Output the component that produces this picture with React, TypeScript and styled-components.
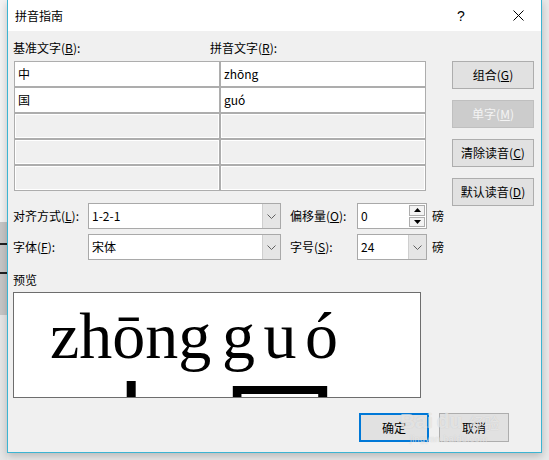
import React from 'react';
import styled, { createGlobalStyle } from 'styled-components';

const GlobalStyle = createGlobalStyle`
  html, body {
    margin: 0;
    padding: 0;
  }
  body {
    background: #ebebeb;
    font-family: "Noto Sans CJK SC", "Noto Sans", sans-serif;
    font-size: 12px;
    color: #000;
  }
`;

const Page = styled.div`
  display: flex;
  width: 549px;
  height: 460px;
  overflow: hidden;
  background: #e9e9e9;
`;

const LeftStrip = styled.div`
  width: 7px;
  flex-shrink: 0;
  display: flex;
  flex-direction: column;
`;

const StripPart = styled.div<{ $h: number; $bg: string }>`
  height: ${(p) => p.$h}px;
  background: ${(p) => p.$bg};
`;

const Window = styled.div`
  position: relative;
  width: 535px;
  height: 453px;
  flex-shrink: 0;
  box-sizing: border-box;
  border: 1px solid #3cb4d2;
  border-top: none;
  background: #f0f0f0;
  display: flex;
  flex-direction: column;
  box-shadow: 0 3px 8px rgba(0, 0, 0, 0.22);
`;

const TitleBar = styled.div`
  height: 31px;
  background: #fff;
  display: flex;
  align-items: center;
  padding-left: 7px;
  font-size: 12px;
`;

const Title = styled.div`
  flex: 1;
  line-height: 16px;
`;

const TitleButton = styled.div<{ $w: number }>`
  width: ${(p) => p.$w}px;
  height: 31px;
  display: flex;
  align-items: center;
  justify-content: center;
  font-family: "Liberation Sans", sans-serif;
  font-size: 14px;
`;

const Body = styled.div`
  display: flex;
  flex-direction: column;
  padding: 9px 0 0 5px;
`;

const TopRow = styled.div`
  display: flex;
`;

const MainCol = styled.div`
  width: 432px;
  display: flex;
  flex-direction: column;
`;

const LabelsRow = styled.div`
  display: flex;
  height: 16px;
  line-height: 16px;
`;

const Label = styled.div<{ $w?: number; $ml?: number }>`
  width: ${(p) => (p.$w ? `${p.$w}px` : 'auto')};
  margin-left: ${(p) => p.$ml ?? 0}px;
  line-height: 16px;
  white-space: nowrap;
  flex-shrink: 0;
`;

const Grid = styled.div`
  margin: 5px 0 0 1px;
  display: grid;
  grid-template-columns: 206px 206px;
  grid-auto-rows: 26px;
`;

const Cell = styled.div<{ $filled: boolean }>`
  box-sizing: border-box;
  border: 1px solid #adadad;
  background: ${(p) => (p.$filled ? '#fff' : '#f0f0f0')};
  box-shadow: ${(p) => (p.$filled ? 'none' : 'inset 0 0 0 1px #fff')};
  padding-left: 3px;
  line-height: 24px;
  font-size: 12px;
`;

const OptionRow = styled.div<{ $mt: number }>`
  display: flex;
  align-items: center;
  height: 26px;
  margin-top: ${(p) => p.$mt}px;
`;

const Combo = styled.div<{ $w: number }>`
  width: ${(p) => p.$w}px;
  height: 26px;
  box-sizing: border-box;
  border: 1px solid #a9a9a9;
  background: #fff;
  display: flex;
  align-items: stretch;
  flex-shrink: 0;
`;

const ComboText = styled.div`
  flex: 1;
  padding-left: 3px;
  line-height: 24px;
  font-size: 12px;
`;

const DropButton = styled.div`
  width: 17px;
  background: #e5e5e5;
  border-left: 1px solid #cfcfcf;
  display: flex;
  align-items: center;
  justify-content: center;
`;

const SpinButtons = styled.div`
  width: 16px;
  display: flex;
  flex-direction: column;
  padding: 1px 1px 1px 0;
  gap: 1px;
`;

const SpinHalf = styled.div`
  flex: 1;
  border: 1px solid #adadad;
  background: #f3f3f3;
  display: flex;
  align-items: center;
  justify-content: center;
`;

const Unit = styled.div`
  margin-left: 5px;
  line-height: 16px;
`;

const PreviewLabel = styled.div`
  margin-top: 12px;
  line-height: 16px;
`;

const Preview = styled.div`
  margin-top: 4px;
  width: 408px;
  height: 106px;
  box-sizing: border-box;
  border: 1px solid #6d6d6d;
  background: #fff;
  overflow: hidden;
  display: flex;
  gap: 9px;
  padding: 10px 0 0 36px;
`;

const RubyCol = styled.div`
  display: flex;
  flex-direction: column;
  align-items: center;
`;

const Pinyin = styled.div<{ $w: number; $spread?: boolean }>`
  width: ${(p) => p.$w}px;
  display: flex;
  justify-content: ${(p) => (p.$spread ? 'space-between' : 'flex-start')};
  font-family: "Liberation Serif", "Times New Roman", serif;
  font-size: 66px;
  line-height: 66px;
`;

const Hanzi = styled.div`
  margin-top: 3px;
  font-family: "Noto Sans CJK SC", sans-serif;
  font-size: 114px;
  line-height: 112px;
`;

const ButtonCol = styled.div`
  margin: 21px 0 0 7px;
  display: flex;
  flex-direction: column;
  gap: 11px;
`;

const Button = styled.div<{ $w: number; $h: number; $disabled?: boolean; $default?: boolean }>`
  width: ${(p) => p.$w}px;
  height: ${(p) => p.$h}px;
  box-sizing: border-box;
  border: ${(p) =>
    p.$default ? '2px solid #0078d7' : p.$disabled ? '1px solid #bfbfbf' : '1px solid #adadad'};
  background: ${(p) => (p.$disabled ? '#cccccc' : '#e1e1e1')};
  color: ${(p) => (p.$disabled ? '#f4f4f4' : '#000')};
  display: flex;
  align-items: center;
  justify-content: center;
  font-size: 12px;
  line-height: 16px;
`;

const Footer = styled.div`
  margin-top: 15px;
  display: flex;
  justify-content: flex-end;
  gap: 10px;
  padding-right: 32px;
`;

const Watermark = styled.div`
  position: absolute;
  left: 392px;
  top: 410px;
  color: rgba(255, 255, 255, 0.55);
  text-shadow: 0 0 1px rgba(150, 150, 150, 0.45);
  font-family: "Liberation Sans", sans-serif;
  pointer-events: none;
`;

const WmLogo = styled.div`
  display: flex;
  align-items: flex-end;
  gap: 4px;
  font-size: 21px;
  font-weight: bold;
  line-height: 22px;
`;

const WmCn = styled.span`
  font-family: "Noto Sans CJK SC", sans-serif;
  font-size: 15px;
  font-weight: normal;
  line-height: 18px;
  margin-left: 3px;
`;

const WmUrl = styled.div`
  font-size: 9px;
  line-height: 10px;
  margin: 2px 0 0 10px;
  letter-spacing: 0.3px;
`;

const Chevron = () => (
  <svg width="9" height="5" viewBox="0 0 9 5">
    <polyline points="0.5,0.5 4.5,4.5 8.5,0.5" fill="none" stroke="#606060" strokeWidth="1" />
  </svg>
);

const Tri = ({ up }: { up: boolean }) => (
  <svg width="7" height="4" viewBox="0 0 7 4">
    <polygon points={up ? '3.5,0 7,4 0,4' : '0,0 7,0 3.5,4'} fill="#000" />
  </svg>
);

const CloseGlyph = () => (
  <svg width="11" height="11" viewBox="0 0 11 11">
    <path d="M0.5 0.5 L10.5 10.5 M10.5 0.5 L0.5 10.5" stroke="#000" strokeWidth="1" />
  </svg>
);

const rows: [string, string][] = [
  ['中', 'zhōng'],
  ['国', 'guó'],
  ['', ''],
  ['', ''],
  ['', ''],
];

export default function App() {
  return (
    <>
      <GlobalStyle />
      <Page>
        <LeftStrip>
          <StripPart $h={222} $bg="#f3f3f3" />
          <StripPart $h={21} $bg="#c6c6c6" />
          <StripPart $h={2} $bg="#202020" />
          <StripPart $h={27} $bg="#c6c6c6" />
          <StripPart $h={2} $bg="#202020" />
          <StripPart $h={41} $bg="#c6c6c6" />
          <StripPart $h={145} $bg="#e6e6e6" />
        </LeftStrip>
        <Window>
          <TitleBar>
            <Title>拼音指南</Title>
            <TitleButton $w={30}>?</TitleButton>
            <TitleButton $w={19} />
            <TitleButton $w={46}>
              <CloseGlyph />
            </TitleButton>
          </TitleBar>
          <Body>
            <TopRow>
              <MainCol>
                <LabelsRow>
                  <Label $w={197}>
                    基准文字(<u>B</u>):
                  </Label>
                  <Label>
                    拼音文字(<u>R</u>):
                  </Label>
                </LabelsRow>
                <Grid>
                  {rows.map(([a, b], i) => (
                    <React.Fragment key={i}>
                      <Cell $filled={i < 2}>{a}</Cell>
                      <Cell $filled={i < 2}>{b}</Cell>
                    </React.Fragment>
                  ))}
                </Grid>
                <OptionRow $mt={12}>
                  <Label $w={75}>
                    对齐方式(<u>L</u>):
                  </Label>
                  <Combo $w={193}>
                    <ComboText>1-2-1</ComboText>
                    <DropButton>
                      <Chevron />
                    </DropButton>
                  </Combo>
                  <Label $w={67} $ml={9}>
                    偏移量(<u>O</u>):
                  </Label>
                  <Combo $w={70}>
                    <ComboText>0</ComboText>
                    <SpinButtons>
                      <SpinHalf>
                        <Tri up />
                      </SpinHalf>
                      <SpinHalf>
                        <Tri up={false} />
                      </SpinHalf>
                    </SpinButtons>
                  </Combo>
                  <Unit>磅</Unit>
                </OptionRow>
                <OptionRow $mt={5}>
                  <Label $w={75}>
                    字体(<u>F</u>):
                  </Label>
                  <Combo $w={193}>
                    <ComboText>宋体</ComboText>
                    <DropButton>
                      <Chevron />
                    </DropButton>
                  </Combo>
                  <Label $w={67} $ml={9}>
                    字号(<u>S</u>):
                  </Label>
                  <Combo $w={70}>
                    <ComboText>24</ComboText>
                    <DropButton>
                      <Chevron />
                    </DropButton>
                  </Combo>
                  <Unit>磅</Unit>
                </OptionRow>
                <PreviewLabel>预览</PreviewLabel>
                <Preview>
                  <RubyCol>
                    <Pinyin $w={163}>zhōng</Pinyin>
                    <Hanzi>中</Hanzi>
                  </RubyCol>
                  <RubyCol>
                    <Pinyin $w={116} $spread>
                      <span>g</span>
                      <span>u</span>
                      <span>ó</span>
                    </Pinyin>
                    <Hanzi>国</Hanzi>
                  </RubyCol>
                </Preview>
              </MainCol>
              <ButtonCol>
                <Button $w={82} $h={28}>
                  组合(<u>G</u>)
                </Button>
                <Button $w={82} $h={28} $disabled>
                  单字(<u>M</u>)
                </Button>
                <Button $w={82} $h={28}>
                  清除读音(<u>C</u>)
                </Button>
                <Button $w={82} $h={28}>
                  默认读音(<u>D</u>)
                </Button>
              </ButtonCol>
            </TopRow>
            <Footer>
              <Button $w={70} $h={29} $default>
                确定
              </Button>
              <Button $w={70} $h={29}>
                取消
              </Button>
            </Footer>
          </Body>
          <Watermark>
            <WmLogo>
              <span>Bai</span>
              <span>du</span>
              <WmCn>经验</WmCn>
            </WmLogo>
            <WmUrl>jingyan.baidu.com</WmUrl>
          </Watermark>
        </Window>
      </Page>
    </>
  );
}
